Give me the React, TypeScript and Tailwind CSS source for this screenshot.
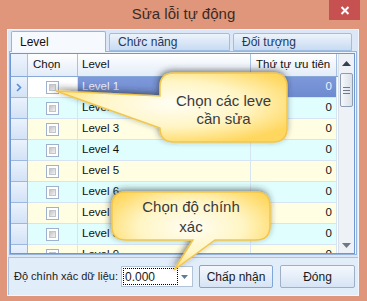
import React from "react";

const font = { fontFamily: '"Liberation Sans", Arial, sans-serif' };

const rows = [
  { name: "Level 1", value: "0", selected: true },
  { name: "Level 2", value: "0" },
  { name: "Level 3", value: "0" },
  { name: "Level 4", value: "0" },
  { name: "Level 5", value: "0" },
  { name: "Level 6", value: "0" },
  { name: "Level 7", value: "0" },
  { name: "Level 8", value: "0" },
  { name: "Level 9", value: "0" },
];

function CheckBox() {
  return (
    <div className="w-[13px] h-[13px] border border-[#9fb1cc] bg-white p-[2px]">
      <div className="w-full h-full bg-gradient-to-br from-[#c4c4c4] to-[#f2f2f2] border border-[#c0c6cf]"></div>
    </div>
  );
}

function Row({ row, index }: { row: (typeof rows)[number]; index: number }) {
  const tint = row.selected ? "bg-white" : index % 2 === 1 ? "bg-[#e0fefe]" : "bg-[#fffee2]";
  const sel = "bg-gradient-to-b from-[#7d98da] to-[#6f8bd0] text-[#eef3ff]";
  return (
    <div className="flex h-[21px] shrink-0">
      <div className="w-[17px] shrink-0 bg-gradient-to-b from-[#eaf2fd] to-[#d3e2f6] border-r border-b border-[#9bb8e0] flex items-center justify-center">
        {row.selected && (
          <svg width="6" height="9" viewBox="0 0 6 9">
            <path d="M1 1 L4.5 4.5 L1 8" fill="none" stroke="#5b8bd3" strokeWidth="1.6" />
          </svg>
        )}
      </div>
      <div className={`w-[50px] shrink-0 flex items-center justify-center border-r border-b border-[#d6e4f4] ${tint}`}>
        <CheckBox />
      </div>
      <div className={`w-[173px] shrink-0 flex items-center pl-[4px] border-r border-b border-[#d6e4f4] ${row.selected ? sel : tint}`}>
        {row.name}
      </div>
      <div className={`w-[86px] shrink-0 flex items-center justify-end pr-[4px] border-r border-b border-[#d6e4f4] ${row.selected ? sel : tint}`}>
        {row.value}
      </div>
    </div>
  );
}

export default function App() {
  return (
    <div className="w-[367px] h-[301px] bg-[#df967b] relative overflow-hidden flex flex-col text-[#111]" style={font}>
      {/* title bar */}
      <div className="h-[29px] shrink-0 flex items-center justify-center text-[15px] text-[#3b2a24] pb-[1px]">
        Sửa lỗi tự động
      </div>
      <div className="absolute top-0 right-[7px] w-[31px] h-[20px] bg-[#c75050] flex items-center justify-center">
        <svg width="10" height="9" viewBox="0 0 10 9">
          <path d="M1.5 1 L8.5 8 M8.5 1 L1.5 8" stroke="white" strokeWidth="2" />
        </svg>
      </div>

      {/* client */}
      <div className="mx-[7px] mr-[8px] mb-[5px] flex-1 flex flex-col bg-[#dbe7f7] border border-[#f3f7fc]">
        {/* tabs */}
        <div className="h-[21px] shrink-0 flex items-end pl-[3px] gap-[3px] text-[12px]">
          <div className="w-[95px] h-[21px] bg-[#f6faff] border border-b-0 border-[#97b5dc] rounded-t-[2px] flex items-center pl-[8px] relative z-10 -mb-[1px] text-[#111]">
            Level
          </div>
          <div className="w-[121px] h-[18px] bg-gradient-to-b from-[#edf3fb] to-[#c8dbf2] border border-[#9fbce2] rounded-t-[2px] flex items-center pl-[8px] text-[#1e395b]">
            Chức năng
          </div>
          <div className="w-[119px] h-[18px] bg-gradient-to-b from-[#edf3fb] to-[#c8dbf2] border border-[#9fbce2] rounded-t-[2px] flex items-center pl-[8px] text-[#1e395b]">
            Đối tượng
          </div>
        </div>

        {/* tab page */}
        <div className="ml-[1px] mr-[1px] h-[204px] shrink-0 bg-[#eef5fd] border border-[#97b5dc] pt-[1px] pl-0 pr-[1px]">
          <div className="h-[201px] border border-[#6f98d2] bg-white flex text-[11.5px]">
            <div className="w-[327px] flex flex-col overflow-hidden">
              {/* header */}
              <div className="flex h-[23px] shrink-0 bg-gradient-to-b from-[#ffffff] to-[#e3ecf8] border-b border-[#86a9d8] text-[#111]">
                <div className="w-[17px] shrink-0 border-r border-[#a9c1e2] bg-gradient-to-b from-[#eef4fd] to-[#d9e6f7]"></div>
                <div className="w-[50px] shrink-0 border-r border-[#a9c1e2] flex items-center pl-[5px]">Chọn</div>
                <div className="w-[173px] shrink-0 border-r border-[#a9c1e2] flex items-center pl-[4px]">Level</div>
                <div className="w-[86px] shrink-0 border-r border-[#a9c1e2] flex items-center pl-[5px]">Thứ tự ưu tiên</div>
              </div>
              {rows.map((r, i) => (
                <Row key={r.name} row={r} index={i} />
              ))}
            </div>
            {/* scrollbar */}
            <div className="flex-1 bg-[#eef1f6] border-l border-[#d8e0ea] flex flex-col items-center">
              <div className="h-[19px] flex items-center justify-center">
                <svg width="9" height="5" viewBox="0 0 9 5">
                  <path d="M0 5 L4.5 0 L9 5 Z" fill="#36404e" />
                </svg>
              </div>
              <div className="w-[13px] h-[34px] rounded-[2px] border border-[#8c9db3] bg-gradient-to-r from-[#f6f8fb] to-[#d9e0e9] flex flex-col items-center justify-center gap-[2px]">
                <div className="w-[7px] h-px bg-[#6b7a8c]"></div>
                <div className="w-[7px] h-px bg-[#6b7a8c]"></div>
                <div className="w-[7px] h-px bg-[#6b7a8c]"></div>
              </div>
              <div className="flex-1"></div>
              <div className="h-[16px] flex items-center justify-center">
                <svg width="9" height="5" viewBox="0 0 9 5">
                  <path d="M0 0 L4.5 5 L9 0 Z" fill="#6d7886" />
                </svg>
              </div>
            </div>
          </div>
        </div>

        {/* bottom bar */}
        <div className="mt-[2px] flex-1 bg-[#e2edfa] border-t border-l border-[#a9c3e5] flex items-center pl-[5px] text-[12px] text-[#1a1a1a]">
          <span className="w-[107px] shrink-0 whitespace-nowrap text-[11px]">Độ chính xác dữ liệu:</span>
          <div className="w-[72px] h-[21px] shrink-0 bg-white border border-[#b2c3d8] flex items-center p-[1px]">
            <div className="w-[55px] h-[17px] border border-dotted border-black flex items-center pl-[1px]">0.000</div>
            <div className="flex-1 flex items-center justify-center">
              <svg width="7" height="4" viewBox="0 0 7 4">
                <path d="M0 0 L3.5 4 L7 0 Z" fill="#5b7aa3" />
              </svg>
            </div>
          </div>
          <button className="ml-[6px] w-[74px] h-[23px] shrink-0 rounded-[2px] border border-[#7fa6d8] bg-gradient-to-b from-[#f4f8fd] to-[#d7e4f5] text-[12px]" style={font}>
            Chấp nhận
          </button>
          <button className="ml-[7px] w-[75px] h-[23px] shrink-0 rounded-[2px] border border-[#9fb0c6] bg-gradient-to-b from-[#f4f8fd] to-[#d7e4f5] text-[12px]" style={font}>
            Đóng
          </button>
        </div>
      </div>

      {/* callouts */}
      <svg className="absolute left-0 top-0 pointer-events-none" width="367" height="301" viewBox="0 0 367 301">
        <defs>
          <radialGradient id="cg" cx="50%" cy="45%" r="60%">
            <stop offset="0%" stopColor="#fffef4" />
            <stop offset="55%" stopColor="#fff5c4" />
            <stop offset="100%" stopColor="#ffd75f" />
          </radialGradient>
          <filter id="sh" x="-20%" y="-30%" width="140%" height="160%">
            <feDropShadow dx="-1" dy="-2" stdDeviation="3" floodColor="#2a2a2a" floodOpacity="0.6" />
          </filter>
        </defs>
        <path
          d="M174 73 H273 Q287 73 287 87 V128 Q287 142 273 142 H174 Q160 142 160 128 L56 91 L160 96 V87 Q160 73 174 73 Z"
          fill="url(#cg)"
          stroke="#f2c64c"
          strokeWidth="1.5"
          filter="url(#sh)"
        />
        <path
          d="M126 192 H256 Q270 192 270 206 V226 Q270 240 256 240 H215 L174 270 L193 240 H126 Q112 240 112 226 V206 Q112 192 126 192 Z"
          fill="url(#cg)"
          stroke="#f2c64c"
          strokeWidth="1.5"
          filter="url(#sh)"
        />
      </svg>
      <div className="absolute left-[160px] top-[92px] w-[127px] text-center text-[15px] leading-[18px] text-[#3a3a3a]">
        Chọn các leve
        <br />
        cần sửa
      </div>
      <div className="absolute left-[112px] top-[197px] w-[158px] text-center text-[15px] leading-[20px] text-[#3a3a3a]">
        Chọn độ chính
        <br />
        xác
      </div>
    </div>
  );
}
